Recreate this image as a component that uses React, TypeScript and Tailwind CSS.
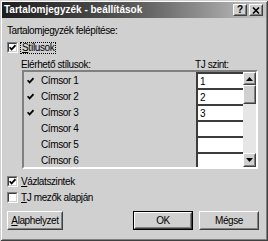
import React from "react";

function CheckMark() {
  return (
    <svg width="7" height="7" viewBox="0 0 7 7" className="block">
      <path d="M0.6 3.2 L2.6 5.4 L6.5 1.2" stroke="#000" strokeWidth="1.7" fill="none" />
    </svg>
  );
}

function Check({ checked }: { checked: boolean }) {
  return (
    <span className="w-[11px] h-[11px] shrink-0 flex border border-t-[#808080] border-l-[#808080] border-b-white border-r-white">
      <span className="flex-1 flex items-center justify-center bg-white border border-t-[#404040] border-l-[#404040] border-b-[#d0d0d0] border-r-[#d0d0d0]">
        {checked && <CheckMark />}
      </span>
    </span>
  );
}

function Raised({ className, children }: { className?: string; children?: React.ReactNode }) {
  return (
    <div className={"flex border border-t-white border-l-white border-b-[#404040] border-r-[#404040] " + (className || "")}>
      <div className="flex-1 flex items-center justify-center border border-t-[#d0d0d0] border-l-[#d0d0d0] border-b-[#808080] border-r-[#808080] bg-[#d0d0d0]">
        {children}
      </div>
    </div>
  );
}

const rows = [
  { name: "Címsor 1", checked: true, level: "1" },
  { name: "Címsor 2", checked: true, level: "2" },
  { name: "Címsor 3", checked: true, level: "3" },
  { name: "Címsor 4", checked: false, level: "" },
  { name: "Címsor 5", checked: false, level: "" },
  { name: "Címsor 6", checked: false, level: "" },
];

export default function App() {
  return (
    <div className="w-[268px] h-[241px] overflow-hidden bg-[#d0d0d0] shadow-[inset_1px_1px_0_#d0d0d0,inset_-1px_-1px_0_#404040,inset_2px_2px_0_#ffffff,inset_-2px_-2px_0_#808080] flex flex-col text-[10px] tracking-[-0.4px] text-black font-['Liberation_Sans',Arial,sans-serif]">
      {/* title bar */}
      <div className="mx-[2px] mt-[2px] h-[16px] shrink-0 bg-linear-to-r from-[#1e1e1e] via-[#5a5a5a] to-[#c6c6c6] flex items-center pl-[2px] pr-[3px]">
        <span className="flex-1 text-white font-bold text-[10px] tracking-normal leading-none">
          Tartalomjegyzék - beállítások
        </span>
        <Raised className="w-[14px] h-[12px]">
          <span className="font-bold text-[10px] leading-none tracking-normal">?</span>
        </Raised>
        <Raised className="w-[14px] h-[12px] ml-[2px]">
          <svg width="8" height="7" viewBox="0 0 8 7" className="block">
            <path d="M1 0.5 L7 6.5 M7 0.5 L1 6.5" stroke="#000" strokeWidth="1.6" fill="none" />
          </svg>
        </Raised>
      </div>

      {/* body */}
      <div className="flex flex-col pl-[7px] pr-[9px]">
        <div className="mt-[6px] h-[13px] flex items-center">Tartalomjegyzék felépítése:</div>

        <div className="mt-[4px] h-[13px] flex items-center">
          <Check checked />
          <span className="ml-[2px] h-[12px] px-[1px] flex items-center border border-dotted border-black">
            <span className="underline decoration-1 underline-offset-1">S</span>tílusok
          </span>
        </div>

        <div className="mt-[4px] h-[12px] flex items-center">
          <span className="ml-[14px] w-[174px]">Elérhető stílusok:</span>
          <span>TJ szint:</span>
        </div>

        {/* list panel */}
        <div className="ml-[15px] w-[236px] h-[99px] flex border-[2px] border-t-[#808080] border-l-[#808080] border-b-white border-r-white">
          <div className="flex-1 flex overflow-hidden">
            <div className="w-[172px] flex flex-col">
              {rows.map((r) => (
                <div key={r.name} className="h-[16px] shrink-0 flex items-center">
                  <span className="w-[17px] pl-[3px] flex items-center">{r.checked && <CheckMark />}</span>
                  <span>{r.name}</span>
                </div>
              ))}
            </div>
            <div className="w-[47px] flex flex-col">
              {rows.map((r) => (
                <div
                  key={r.name}
                  className="h-[16px] shrink-0 bg-white border-t-[2px] border-l-[2px] border-[#3c3c3c] flex items-center pl-[2px]"
                >
                  {r.level}
                </div>
              ))}
            </div>
            <div className="w-[13px] flex flex-col">
              <Raised className="h-[13px] shrink-0">
                <svg width="7" height="4" viewBox="0 0 7 4" className="block">
                  <path d="M3.5 0 L7 4 L0 4 Z" fill="#000" />
                </svg>
              </Raised>
              <Raised className="h-[19px] shrink-0" />
              <div className="flex-1 bg-[#e6e6e6]" />
              <Raised className="h-[14px] shrink-0">
                <svg width="7" height="4" viewBox="0 0 7 4" className="block">
                  <path d="M0 0 L7 0 L3.5 4 Z" fill="#000" />
                </svg>
              </Raised>
            </div>
          </div>
        </div>

        <div className="mt-[6px] h-[13px] flex items-center">
          <Check checked />
          <span className="ml-[3px]">
            <span className="underline decoration-1 underline-offset-1">V</span>ázlatszintek
          </span>
        </div>

        <div className="mt-[3px] h-[13px] flex items-center">
          <Check checked={false} />
          <span className="ml-[3px]">
            <span className="underline decoration-1 underline-offset-1">T</span>J mezők alapján
          </span>
        </div>

        <div className="mt-[7px] h-[19px] flex">
          <Raised className="w-[56px] h-[19px]">
            <span>
              <span className="underline decoration-1 underline-offset-1">A</span>laphelyzet
            </span>
          </Raised>
          <div className="flex-1" />
          <div className="w-[60px] h-[19px] flex border border-black">
            <Raised className="flex-1">
              <span>OK</span>
            </Raised>
          </div>
          <Raised className="w-[60px] h-[19px] ml-[6px]">
            <span>Mégse</span>
          </Raised>
        </div>
      </div>
    </div>
  );
}
